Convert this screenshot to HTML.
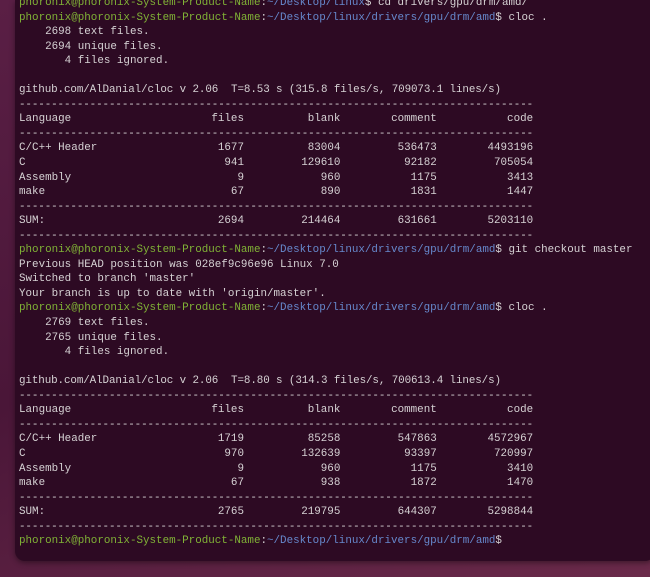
<!DOCTYPE html>
<html><head><meta charset="utf-8"><style>
html,body{margin:0;padding:0;width:650px;height:577px;overflow:hidden;background:linear-gradient(160deg,#5a1f45 0%,#4a1638 50%,#6a2a4a 100%);}
.term{position:absolute;left:15px;top:0;width:640px;height:561px;background:#2d0a23;border-radius:0 0 10px 10px;box-shadow:0 2px 6px rgba(0,0,0,.4);}
pre{position:absolute;left:19px;top:-4px;margin:0;font-family:"Liberation Mono",monospace;font-size:10.88px;line-height:14.54px;color:#d6d2d4;white-space:pre;}
.g{color:#80b236}.b{color:#6688cc}
.d{letter-spacing:-0.1px}
.n{display:inline-block;width:160.7px}.c{display:inline-block;width:96.4px;text-align:right}.f{display:inline-block;width:64.3px;text-align:right}
</style></head><body>
<div class="term"></div>
<pre><span class="g">phoronix@phoronix-System-Product-Name</span>:<span class="b">~/Desktop/linux</span>$ cd drivers/gpu/drm/amd/
<span class="g">phoronix@phoronix-System-Product-Name</span>:<span class="b">~/Desktop/linux/drivers/gpu/drm/amd</span>$ cloc .
    2698 text files.
    2694 unique files.
       4 files ignored.

<span class="d">github.com/AlDanial/cloc v 2.06  T=8.53 s (315.8 files/s, 709073.1 lines/s)</span>
<span class="d">--------------------------------------------------------------------------------</span>
<span class="n">Language</span><span class="f">files</span><span class="c">blank</span><span class="c">comment</span><span class="c">code</span>
<span class="d">--------------------------------------------------------------------------------</span>
<span class="n">C/C++ Header</span><span class="f">1677</span><span class="c">83004</span><span class="c">536473</span><span class="c">4493196</span>
<span class="n">C</span><span class="f">941</span><span class="c">129610</span><span class="c">92182</span><span class="c">705054</span>
<span class="n">Assembly</span><span class="f">9</span><span class="c">960</span><span class="c">1175</span><span class="c">3413</span>
<span class="n">make</span><span class="f">67</span><span class="c">890</span><span class="c">1831</span><span class="c">1447</span>
<span class="d">--------------------------------------------------------------------------------</span>
<span class="n">SUM:</span><span class="f">2694</span><span class="c">214464</span><span class="c">631661</span><span class="c">5203110</span>
<span class="d">--------------------------------------------------------------------------------</span>
<span class="g">phoronix@phoronix-System-Product-Name</span>:<span class="b">~/Desktop/linux/drivers/gpu/drm/amd</span>$ git checkout master
Previous HEAD position was 028ef9c96e96 Linux 7.0
Switched to branch 'master'
Your branch is up to date with 'origin/master'.
<span class="g">phoronix@phoronix-System-Product-Name</span>:<span class="b">~/Desktop/linux/drivers/gpu/drm/amd</span>$ cloc .
    2769 text files.
    2765 unique files.
       4 files ignored.

<span class="d">github.com/AlDanial/cloc v 2.06  T=8.80 s (314.3 files/s, 700613.4 lines/s)</span>
<span class="d">--------------------------------------------------------------------------------</span>
<span class="n">Language</span><span class="f">files</span><span class="c">blank</span><span class="c">comment</span><span class="c">code</span>
<span class="d">--------------------------------------------------------------------------------</span>
<span class="n">C/C++ Header</span><span class="f">1719</span><span class="c">85258</span><span class="c">547863</span><span class="c">4572967</span>
<span class="n">C</span><span class="f">970</span><span class="c">132639</span><span class="c">93397</span><span class="c">720997</span>
<span class="n">Assembly</span><span class="f">9</span><span class="c">960</span><span class="c">1175</span><span class="c">3410</span>
<span class="n">make</span><span class="f">67</span><span class="c">938</span><span class="c">1872</span><span class="c">1470</span>
<span class="d">--------------------------------------------------------------------------------</span>
<span class="n">SUM:</span><span class="f">2765</span><span class="c">219795</span><span class="c">644307</span><span class="c">5298844</span>
<span class="d">--------------------------------------------------------------------------------</span>
<span class="g">phoronix@phoronix-System-Product-Name</span>:<span class="b">~/Desktop/linux/drivers/gpu/drm/amd</span>$</pre>
</body></html>
